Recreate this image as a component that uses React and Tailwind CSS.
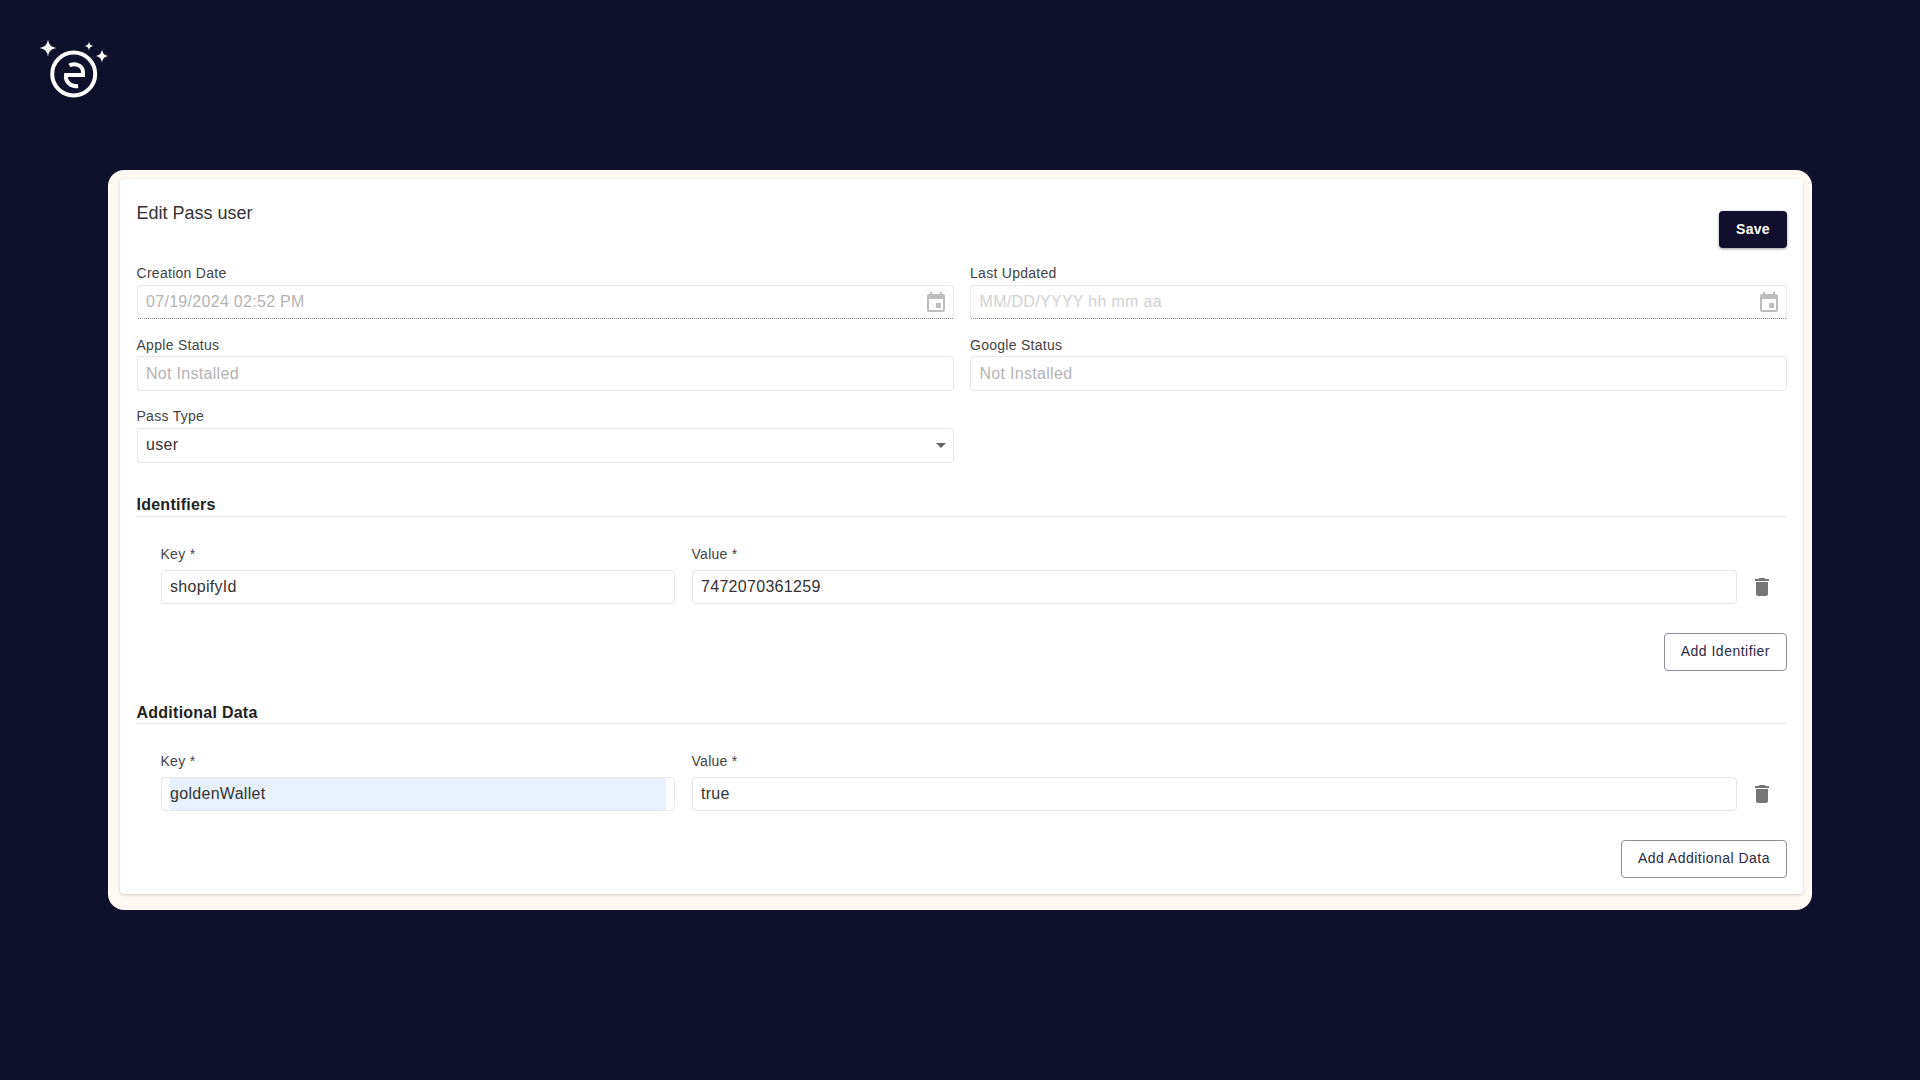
import React from "react";

const font = "font-['Liberation_Sans',Arial,sans-serif]";

function Logo() {
  return (
    <svg width="90" height="80" viewBox="0 0 90 80" fill="none" className="block">
      <path d="M18 9.500 C19 15 21 17 26.500 18 C21 19 19 21 18 26.500 C17 21 15 19 9.500 18 C15 17 17 15 18 9.500Z" fill="#fff" />
      <path d="M59 11.500 C59.500 14.500 60.500 15.500 63.500 16 C60.500 16.500 59.500 17.500 59 20.500 C58.500 17.500 57.500 16.500 54.500 16 C57.500 15.500 58.500 14.500 59 11.500Z" fill="#fff" />
      <path d="M72 19.500 C72.700 23.500 74.500 25.300 78.500 26 C74.500 26.700 72.700 28.500 72 32.500 C71.300 28.500 69.500 26.700 65.500 26 C69.500 25.300 71.300 23.500 72 19.500Z" fill="#fff" />
      <circle cx="43.700" cy="44" r="21.500" stroke="#fff" strokeWidth="4" />
      <path d="M39.500 35.500 C44 32.500 53 35 53 42 V45 H36 C35 52 41 57 48 56" stroke="#fff" strokeWidth="4" />
    </svg>
  );
}

function CalendarIcon() {
  return (
    <svg viewBox="0 0 24 24" className="w-6 h-6 shrink-0" fill="#bdbdbd">
      <path d="M17 12h-5v5h5v-5zM16 1v2H8V1H6v2H5c-1.11 0-1.99.9-1.99 2L3 19c0 1.1.89 2 2 2h14c1.1 0 2-.9 2-2V5c0-1.1-.9-2-2-2h-1V1h-2zm3 18H5V8h14v11z" />
    </svg>
  );
}

function TrashIcon() {
  return (
    <svg viewBox="0 0 24 24" className="w-6 h-6 shrink-0" fill="#757575">
      <path d="M6 19c0 1.100.9 2 2 2h8c1.100 0 2-.9 2-2V7H6v12zM19 4h-3.500l-1-1h-5l-1 1H5v2h14V4z" />
    </svg>
  );
}

function Label({ children, className = "" }) {
  return <div className={`h-[17px] text-[14px] leading-[17px] tracking-[0.28px] text-[#444444] ${className}`}>{children}</div>;
}

function DateField({ label, value, placeholder }) {
  return (
    <div>
      <Label className="mb-[2.500px]">{label}</Label>
      <div className="h-[35px] rounded-[4px] border border-[#e8e8e8] border-b-0 flex items-center justify-between pl-[8.500px] pr-[5px] relative">
        <span className={`text-[16px] tracking-[0.3px] -mt-[2px] ${value ? "text-[#b4b4b4]" : "text-[#d2d2d2]"}`}>{value || placeholder}</span>
        <CalendarIcon />
        <div className="absolute left-0 right-0 bottom-[1px] border-b border-dotted border-[#8c8c8c]" />
      </div>
    </div>
  );
}

function StatusField({ label, value }) {
  return (
    <div>
      <Label className="mb-[2.500px]">{label}</Label>
      <div className="h-[35px] rounded-[4px] border border-[#e6e6e6] flex items-center pl-[8.500px]">
        <span className="text-[16px] tracking-[0.3px] text-[#b4b4b4]">{value}</span>
      </div>
    </div>
  );
}

function Section({ title, keyName, value, keyHighlight, button, className = "", headClass = "h-[21px]" }) {
  return (
    <div className={className}>
      <div className={`${headClass} text-[16px] leading-[20px] tracking-[0.25px] font-bold text-[#222222] border-b border-[#e6e6e6]`}>{title}</div>
      <div className="mt-[29.5px] pl-[24px] flex items-end">
        <div className="w-[514.5px] shrink-0">
          <Label className="mb-[6.500px]">Key *</Label>
          <div className="h-[34.5px] rounded-[4px] border border-[#e6e6e6] pl-[8.500px] pr-[8px]">
            <div className={`h-full flex items-center text-[16px] tracking-[0.3px] text-[#333333] ${keyHighlight ? "bg-[#e8f0fe]" : ""}`}>{keyName}</div>
          </div>
        </div>
        <div className="ml-[16.500px] w-[1045px] shrink-0">
          <Label className="mb-[6.500px]">Value *</Label>
          <div className="h-[34.5px] rounded-[4px] border border-[#e6e6e6] pl-[8.500px] flex items-center text-[16px] tracking-[0.3px] text-[#333333]">{value}</div>
        </div>
        <div className="ml-[13px] h-[34.5px] flex items-center">
          <TrashIcon />
        </div>
      </div>
      <div className="mt-[28.5px] flex justify-end">
        <button className="h-[38px] px-[16px] rounded-[4px] border border-[#8f8d9c] bg-white text-[14px] text-[#2b2942] tracking-[0.48px]">{button}</button>
      </div>
    </div>
  );
}

export default function App() {
  return (
    <div className={`h-[1080px] bg-[#0f1029] overflow-hidden ${font}`}>
      <div className="pl-[30px] pt-[30px] h-[170px]">
        <Logo />
      </div>
      <div className="ml-[108px] w-[1704px] h-[740px] bg-[#fef9f3] rounded-[16px] pl-[12px] pr-[9px] pt-[9px]">
        <div className="h-[715px] bg-white rounded-[4px] shadow-[0_1px_3px_rgba(0,0,0,0.18)] pl-[16.5px] pr-[16px] pt-[22px]">
          <div className="h-[47px] flex justify-between items-start">
            <div className="text-[18px] leading-[24px] text-[#333333]">Edit Pass user</div>
            <button className="mt-[10px] h-[37px] w-[68px] rounded-[4px] bg-[#120f2d] text-white text-[14px] font-bold tracking-[0.3px] shadow-[0_1px_3px_rgba(0,0,0,0.4)]">Save</button>
          </div>
          <div className="mt-[17px] grid grid-cols-2 gap-x-[16.5px] gap-y-[17px]">
            <DateField label="Creation Date" value="07/19/2024 02:52 PM" />
            <DateField label="Last Updated" placeholder="MM/DD/YYYY hh mm aa" />
            <StatusField label="Apple Status" value="Not Installed" />
            <StatusField label="Google Status" value="Not Installed" />
            <div>
              <Label className="mb-[2.500px]">Pass Type</Label>
              <div className="h-[35px] rounded-[4px] border border-[#e6e6e6] flex items-center justify-between pl-[8.500px]">
                <span className="text-[16px] tracking-[0.3px] text-[#333333]">user</span>
                <svg viewBox="0 0 24 24" className="w-6 h-6 shrink-0" fill="#666666"><path d="M7 10l5 5 5-5z" /></svg>
              </div>
            </div>
          </div>
          <Section className="mt-[32.5px]" headClass="h-[21.5px]" title="Identifiers" keyName="shopifyId" value="7472070361259" button="Add Identifier" />
          <Section className="mt-[32px]" title="Additional Data" keyName="goldenWallet" value="true" keyHighlight button="Add Additional Data" />
        </div>
      </div>
    </div>
  );
}
